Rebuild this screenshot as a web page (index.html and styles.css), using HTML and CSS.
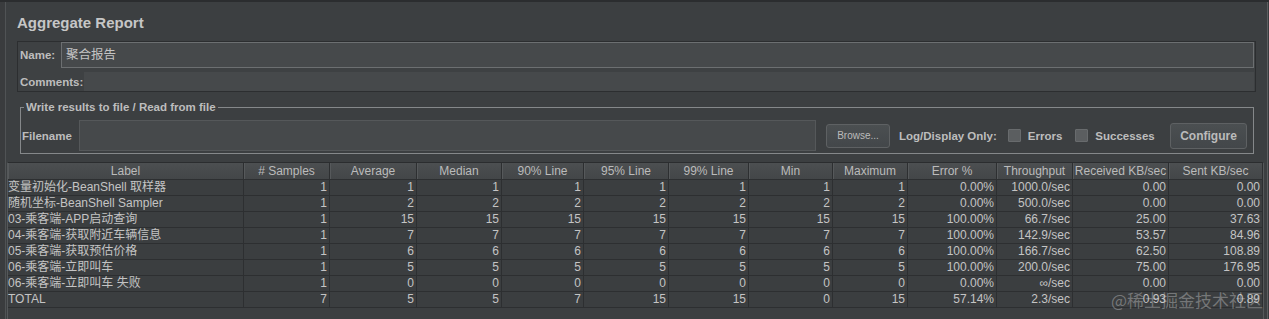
FILE: index.html
```html
<!DOCTYPE html>
<html>
<head>
<meta charset="utf-8">
<title>Aggregate Report</title>
<link rel="stylesheet" href="styles.css">
</head>
<body>
<div class="topline"></div>
<div class="panel">
  <h1 class="title">Aggregate Report</h1>
  <div class="namebox">
    <div class="name-row"><span class="lbl name-lbl">Name:</span><div class="field name-field">聚合报告</div></div>
    <div class="comments-row"><span class="lbl comments-lbl">Comments:</span><div class="field comments-field"></div></div>
  </div>
  <fieldset class="filebox">
    <legend>Write results to file / Read from file</legend>
    <div class="file-row">
      <span class="lbl file-lbl">Filename</span>
      <div class="field file-field"></div>
      <button class="btn browse">Browse...</button>
      <span class="lbl log">Log/Display Only:</span>
      <span class="check chk1"></span><span class="lbl chk-lbl">Errors</span>
      <span class="check chk2"></span><span class="lbl chk-lbl">Successes</span>
      <button class="btn configure">Configure</button>
    </div>
  </fieldset>
  <div class="tablewrap">
    <table class="grid">
      <thead>
        <tr>
          <th class="c1">Label</th><th class="c2"># Samples</th><th class="c3">Average</th><th class="c4">Median</th><th class="c5">90% Line</th><th class="c6">95% Line</th><th class="c7">99% Line</th><th class="c8">Min</th><th class="c9">Maximum</th><th class="c10">Error %</th><th class="c11">Throughput</th><th class="c12">Received KB/sec</th><th class="c13">Sent KB/sec</th>
        </tr>
      </thead>
      <tbody>
        <tr><td class="label">变量初始化-BeanShell 取样器</td><td>1</td><td>1</td><td>1</td><td>1</td><td>1</td><td>1</td><td>1</td><td>1</td><td>0.00%</td><td>1000.0/sec</td><td>0.00</td><td>0.00</td></tr>
        <tr><td class="label">随机坐标-BeanShell Sampler</td><td>1</td><td>2</td><td>2</td><td>2</td><td>2</td><td>2</td><td>2</td><td>2</td><td>0.00%</td><td>500.0/sec</td><td>0.00</td><td>0.00</td></tr>
        <tr><td class="label">03-乘客端-APP启动查询</td><td>1</td><td>15</td><td>15</td><td>15</td><td>15</td><td>15</td><td>15</td><td>15</td><td>100.00%</td><td>66.7/sec</td><td>25.00</td><td>37.63</td></tr>
        <tr><td class="label">04-乘客端-获取附近车辆信息</td><td>1</td><td>7</td><td>7</td><td>7</td><td>7</td><td>7</td><td>7</td><td>7</td><td>100.00%</td><td>142.9/sec</td><td>53.57</td><td>84.96</td></tr>
        <tr><td class="label">05-乘客端-获取预估价格</td><td>1</td><td>6</td><td>6</td><td>6</td><td>6</td><td>6</td><td>6</td><td>6</td><td>100.00%</td><td>166.7/sec</td><td>62.50</td><td>108.89</td></tr>
        <tr><td class="label">06-乘客端-立即叫车</td><td>1</td><td>5</td><td>5</td><td>5</td><td>5</td><td>5</td><td>5</td><td>5</td><td>100.00%</td><td>200.0/sec</td><td>75.00</td><td>176.95</td></tr>
        <tr><td class="label">06-乘客端-立即叫车 失败</td><td>1</td><td>0</td><td>0</td><td>0</td><td>0</td><td>0</td><td>0</td><td>0</td><td>0.00%</td><td>∞/sec</td><td>0.00</td><td>0.00</td></tr>
        <tr><td class="label">TOTAL</td><td>7</td><td>5</td><td>5</td><td>7</td><td>15</td><td>15</td><td>0</td><td>15</td><td>57.14%</td><td>2.3/sec</td><td>0.93</td><td>0.89</td></tr>
      </tbody>
    </table>
    <div class="watermark">@稀土掘金技术社区</div>
  </div>
</div>
</body>
</html>
```
FILE: styles.css
```css
* { box-sizing: border-box; }
html, body { margin: 0; height: 100%; }
body {
  background: #3a3c3e;
  font-family: "Liberation Sans", Arial, "Noto Sans CJK SC", sans-serif;
  color: #bbbbbb;
  overflow: hidden;
}
.topline { height: 2px; background: #2b2d2f; }
.panel {
  margin-left: 5px;
  margin-right: 1px;
  height: 317px;
  border-left: 1px solid #505355;
  border-right: 1px solid #5c5f61;
  background: #3c3f41;
  display: flex;
  flex-direction: column;
}
.title {
  margin: 0;
  height: 39px;
  padding: 11px 0 0 11px;
  font-size: 15px;
  line-height: 20px;
  font-weight: bold;
  color: #c6c6c6;
}
.lbl {
  font-size: 11.5px;
  font-weight: bold;
  color: #bdbdbd;
  white-space: nowrap;
}
.namebox {
  margin: 0 11px 0 11px;
  height: 51px;
  border: 1px solid #2c2e30;
  background: #3e4143;
  display: flex;
  flex-direction: column;
}
.name-row { height: 26px; display: flex; align-items: center; }
.name-lbl { width: 43px; padding-left: 2px; }
.field { background: #46494b; }
.name-field {
  flex: 1;
  height: 26px;
  margin-right: 1px;
  border: 1px solid #6c6f71;
  padding-left: 4px;
  font-size: 12.5px;
  line-height: 24px;
  color: #c4c4c4;
}
.comments-row { margin-top: 4px; height: 19px; display: flex; align-items: center; }
.comments-lbl { width: 66px; padding-left: 2px; }
.comments-field { flex: 1; height: 19px; margin-right: 1px; }

.filebox {
  margin: 8px 13px 0 14px;
  padding: 5px 6px 1px 1px;
  border: 1px solid #85888a;
  min-width: 0;
}
.filebox legend {
  margin-left: 2px;
  padding: 0 2px;
  font-size: 11.5px;
  line-height: 14px;
  font-weight: bold;
  color: #bdbdbd;
}
.file-row { display: flex; align-items: center; height: 33px; }
.file-lbl { width: 57px; }
.file-field { width: 737px; height: 31px; border: 1px solid #55585a; }
.btn {
  font-family: "Liberation Sans", Arial, sans-serif;
  color: #bbbbbb;
  border: 1px solid #5e6163;
  border-radius: 3px;
  background: linear-gradient(#4b4f51, #43474a);
  padding: 0;
}
.browse { margin-left: 10px; width: 64px; height: 24px; font-size: 10px; }
.log { margin-left: 9px; }
.check {
  width: 13px;
  height: 13px;
  background: #5b5e60;
  border: 1px solid #686b6d;
  border-radius: 1px;
}
.chk1 { margin-left: 11px; }
.chk2 { margin-left: 13px; }
.chk-lbl { margin-left: 7px; }
.configure {
  margin-left: auto;
  width: 77px;
  height: 26px;
  font-size: 12px;
  font-weight: bold;
}

.tablewrap {
  position: relative;
  flex: 1;
  margin: 8px 3px 0 1px;
  border-top: 1px solid #2b2d2f;
  border-left: 1px solid #55585a;
  border-right: 1px solid #55585a;
  background: #3c3f41;
}
.grid {
  border-collapse: separate;
  border-spacing: 0;
  table-layout: fixed;
  width: 1255px;
  font-size: 12px;
}
.grid th {
  height: 17px;
  padding: 0;
  font-weight: normal;
  color: #bbbbbb;
  background: linear-gradient(#4c4f51, #434648);
  border-right: 1px solid #2d2f31;
  border-bottom: 1px solid #2d2f31;
  box-shadow: inset 1px 0 0 #56595b;
  text-align: center;
  line-height: 16px;
  white-space: nowrap;
  overflow: hidden;
}
.grid td {
  height: 16px;
  padding: 0 2px 0 0;
  border-right: 1px solid #2d2f31;
  border-bottom: 1px solid #2d2f31;
  text-align: right;
  line-height: 15px;
  white-space: nowrap;
  overflow: hidden;
  color: #c4c4c4;
  background: #3b3e40;
}
.grid td.label { text-align: left; padding: 0; }
.c1 { width: 236px; }
.c2 { width: 86px; }
.c3 { width: 87px; }
.c4 { width: 85px; }
.c5 { width: 82px; }
.c6 { width: 85px; }
.c7 { width: 80px; }
.c8 { width: 84px; }
.c9 { width: 75px; }
.c10 { width: 89px; }
.c11 { width: 76px; }
.c12 { width: 96px; }
.c13 { width: 94px; }
.watermark {
  position: absolute;
  right: 0;
  top: 128px;
  font-family: "Noto Sans CJK SC", sans-serif;
  font-size: 17px;
  line-height: 18px;
  color: rgba(215, 215, 215, 0.38);
  white-space: nowrap;
  pointer-events: none;
}
```
